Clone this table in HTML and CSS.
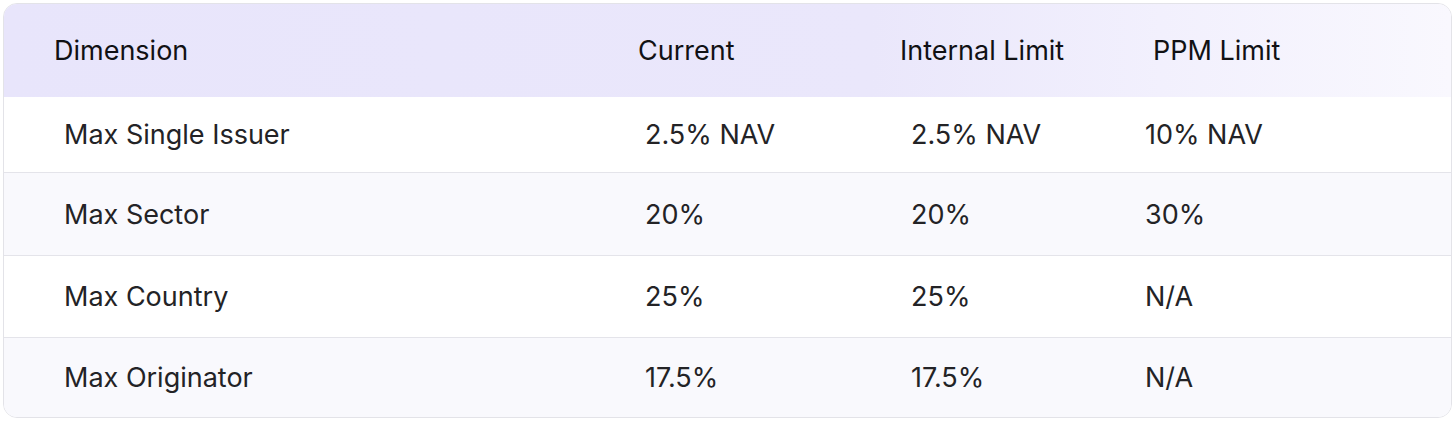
FILE: index.html
```html
<!DOCTYPE html>
<html lang="en">
<head>
<meta charset="utf-8">
<title>Limits</title>
<link rel="stylesheet" href="styles.css">
</head>
<body>
<div class="card">
  <div class="head">
    <div>Dimension</div>
    <div>Current</div>
    <div>Internal Limit</div>
    <div>PPM Limit</div>
  </div>
  <div class="row r1">
    <div>Max Single Issuer</div>
    <div>2.5% NAV</div>
    <div>2.5% NAV</div>
    <div>10% NAV</div>
  </div>
  <div class="row r2 alt">
    <div>Max Sector</div>
    <div>20%</div>
    <div>20%</div>
    <div>30%</div>
  </div>
  <div class="row r3">
    <div>Max Country</div>
    <div>25%</div>
    <div>25%</div>
    <div>N/A</div>
  </div>
  <div class="row r4 alt">
    <div>Max Originator</div>
    <div>17.5%</div>
    <div>17.5%</div>
    <div>N/A</div>
  </div>
</div>
</body>
</html>
```

FILE: styles.css
```css
html, body {
  margin: 0;
  padding: 0;
  background: #ffffff;
}
body {
  padding: 3px 4px 0 3px;
  font-family: "Inter", "Liberation Sans", sans-serif;
}
.card {
  border: 1px solid #e3e3e8;
  border-radius: 14px;
  overflow: hidden;
  background: #ffffff;
}
.head {
  display: grid;
  grid-template-columns: 584px 262px 253px 1fr;
  align-items: center;
  height: 93px;
  padding-left: 50px;
  background: linear-gradient(90deg, #e8e5fb 0%, #eae7fb 60%, #f2f0fd 80%, #f9f8fe 100%);
  color: #111114;
  font-size: 27px;
}
.row {
  display: grid;
  grid-template-columns: 581px 266px 234px 1fr;
  align-items: center;
  padding-left: 60px;
  border-top: 1px solid #e4e4ea;
  color: #232326;
  font-size: 27px;
}
.r1 { height: 75px; border-top: none; }
.r2 { height: 82px; }
.r3 { height: 81px; }
.r4 { height: 79px; }
.alt { background: #f9f9fd; }
```
